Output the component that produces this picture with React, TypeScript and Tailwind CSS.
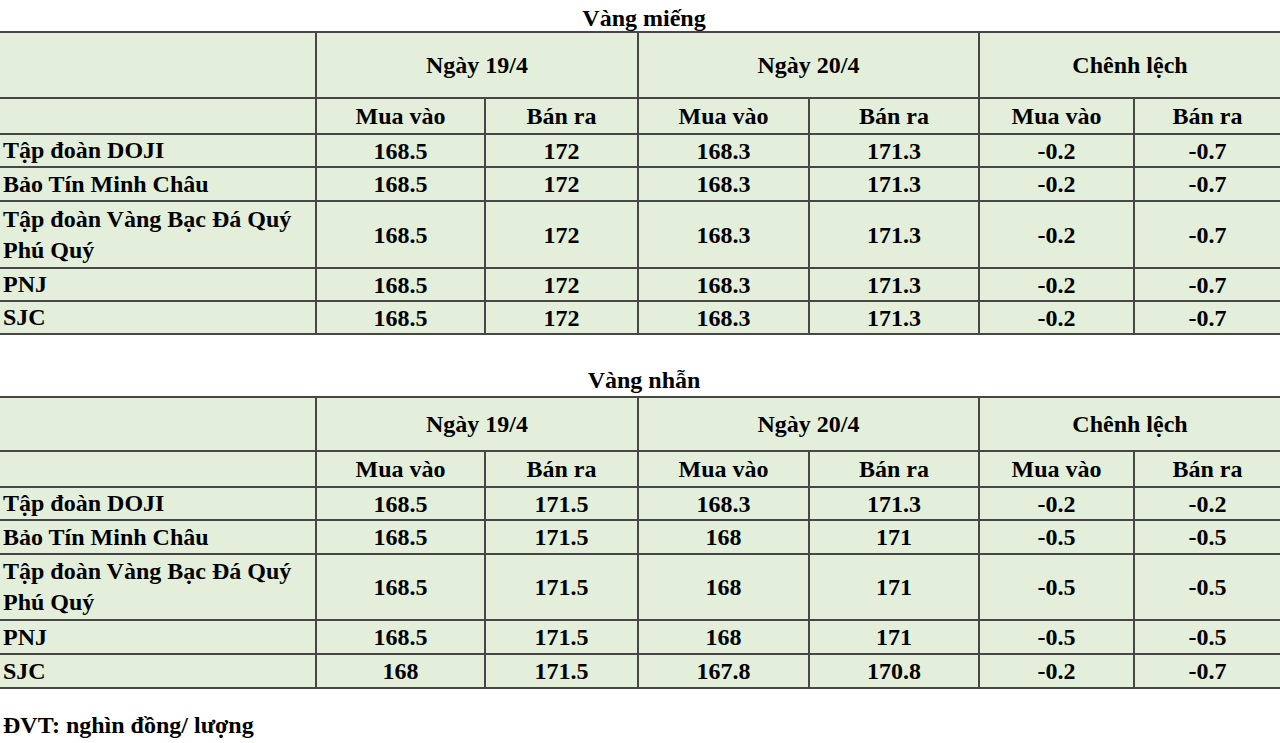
const vangMieng = [
  { name: 'Tập đoàn DOJI', h: 'h-[33px]', v: ['168.5', '172', '168.3', '171.3', '-0.2', '-0.7'] },
  { name: 'Bảo Tín Minh Châu', h: 'h-[34px]', v: ['168.5', '172', '168.3', '171.3', '-0.2', '-0.7'] },
  { name: 'Tập đoàn Vàng Bạc Đá Quý', name2: 'Phú Quý', h: 'h-[67px]', v: ['168.5', '172', '168.3', '171.3', '-0.2', '-0.7'] },
  { name: 'PNJ', h: 'h-[33px]', v: ['168.5', '172', '168.3', '171.3', '-0.2', '-0.7'] },
  { name: 'SJC', h: 'h-[33px]', v: ['168.5', '172', '168.3', '171.3', '-0.2', '-0.7'] },
]

const vangNhan = [
  { name: 'Tập đoàn DOJI', h: 'h-[33px]', v: ['168.5', '171.5', '168.3', '171.3', '-0.2', '-0.2'] },
  { name: 'Bảo Tín Minh Châu', h: 'h-[34px]', v: ['168.5', '171.5', '168', '171', '-0.5', '-0.5'] },
  { name: 'Tập đoàn Vàng Bạc Đá Quý', name2: 'Phú Quý', h: 'h-[66px]', v: ['168.5', '171.5', '168', '171', '-0.5', '-0.5'] },
  { name: 'PNJ', h: 'h-[34px]', v: ['168.5', '171.5', '168', '171', '-0.5', '-0.5'] },
  { name: 'SJC', h: 'h-[34px]', v: ['168', '171.5', '167.8', '170.8', '-0.2', '-0.7'] },
]

type Row = { name: string; name2?: string; h: string; v: string[] }

const cell = 'border-2 border-[#474747] text-center align-middle p-0'
const first = 'border-2 border-l-0 border-[#474747] text-left align-middle p-0 pl-[3px]'
const last = 'border-2 border-r-0 border-[#474747] text-center align-middle p-0'

function PriceTable({ rows, headHeight }: { rows: Row[]; headHeight: string }) {
  return (
    <table className="w-[1280px] table-fixed border-collapse bg-[#e3efdb]">
      <colgroup>
        <col className="w-[316px]" />
        <col className="w-[169px]" />
        <col className="w-[153px]" />
        <col className="w-[171px]" />
        <col className="w-[170px]" />
        <col className="w-[155px]" />
        <col className="w-[146px]" />
      </colgroup>
      <tbody>
        <tr className={headHeight}>
          <td className={first}></td>
          <td colSpan={2} className={cell}>Ngày 19/4</td>
          <td colSpan={2} className={cell}>Ngày 20/4</td>
          <td colSpan={2} className={last}>Chênh lệch</td>
        </tr>
        <tr className="h-[36px]">
          <td className={first}></td>
          <td className={cell}>Mua vào</td>
          <td className={cell}>Bán ra</td>
          <td className={cell}>Mua vào</td>
          <td className={cell}>Bán ra</td>
          <td className={cell}>Mua vào</td>
          <td className={last}>Bán ra</td>
        </tr>
        {rows.map((row, i) => (
          <tr key={i} className={row.h}>
            <td className={`${first} leading-[31px]`}>
              {row.name}
              {row.name2 && (
                <>
                  <br />
                  {row.name2}
                </>
              )}
            </td>
            {row.v.map((val, j) => (
              <td key={j} className={j === 5 ? last : cell}>{val}</td>
            ))}
          </tr>
        ))}
      </tbody>
    </table>
  )
}

export default function App() {
  return (
    <div className="w-[1280px] h-[743px] overflow-hidden bg-white text-black font-bold text-[24px] leading-[30px] font-[family-name:Liberation_Serif,Times_New_Roman,serif]">
      <div className="h-[31px] leading-[36px] text-center pl-[8px]">Vàng miếng</div>
      <PriceTable rows={vangMieng} headHeight="h-[66px]" />
      <div className="h-[61px] flex items-end justify-center">
        <span className="leading-[32px] pl-[8px]">Vàng nhẫn</span>
      </div>
      <PriceTable rows={vangNhan} headHeight="h-[54px]" />
      <div className="pt-[18px] pl-[3px] leading-[36px]">ĐVT: nghìn đồng/ lượng</div>
    </div>
  )
}
